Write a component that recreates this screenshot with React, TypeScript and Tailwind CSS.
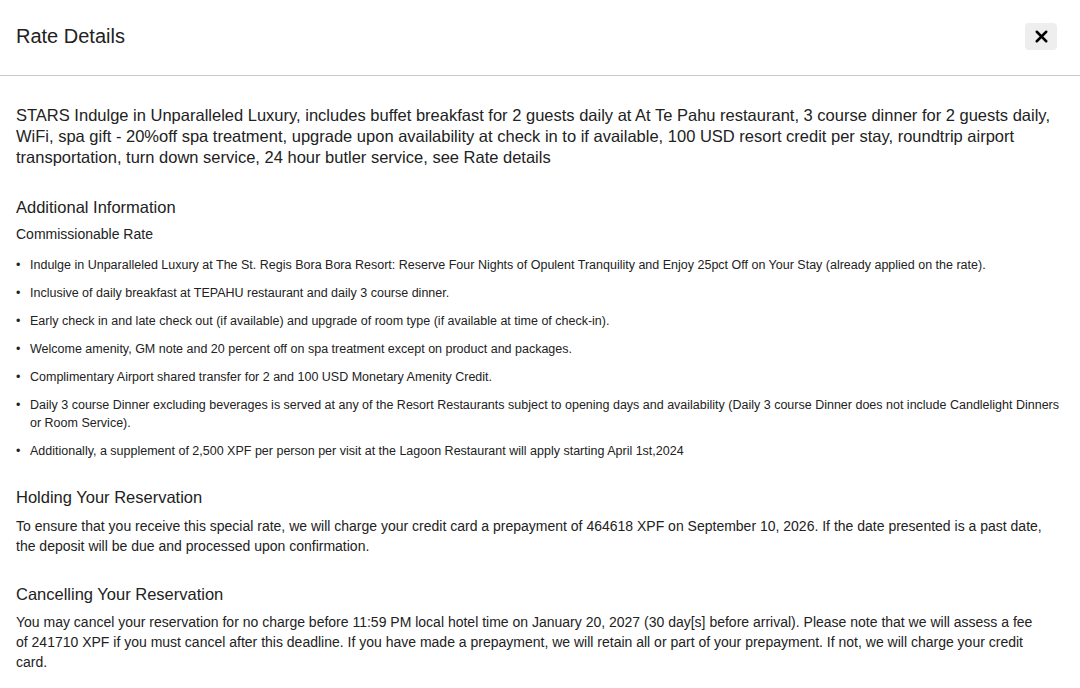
import { X } from "lucide-react";

const bullets = [
  "Indulge in Unparalleled Luxury at The St. Regis Bora Bora Resort: Reserve Four Nights of Opulent Tranquility and Enjoy 25pct Off on Your Stay (already applied on the rate).",
  "Inclusive of daily breakfast at TEPAHU restaurant and daily 3 course dinner.",
  "Early check in and late check out (if available) and upgrade of room type (if available at time of check-in).",
  "Welcome amenity, GM note and 20 percent off on spa treatment except on product and packages.",
  "Complimentary Airport shared transfer for 2 and 100 USD Monetary Amenity Credit.",
  "Daily 3 course Dinner excluding beverages is served at any of the Resort Restaurants subject to opening days and availability (Daily 3 course Dinner does not include Candlelight Dinners or Room Service).",
  "Additionally, a supplement of 2,500 XPF per person per visit at the Lagoon Restaurant will apply starting April 1st,2024",
];

export default function App() {
  return (
    <div className="h-[688px] w-full overflow-hidden bg-white text-[#222] font-['Liberation_Sans',Arial,sans-serif]">
      <header className="flex h-[76px] items-center justify-between border-b border-[#c8c8c8] pl-4 pr-[23px]">
        <h1 className="text-[20px] leading-none -mt-[4px]">Rate Details</h1>
        <button className="flex h-[27px] w-[32px] items-center justify-center rounded bg-[#eeeeee] -mt-[3px]">
          <X className="h-[19px] w-[19px] text-black" strokeWidth={3.2} />
        </button>
      </header>

      <main className="px-4 pt-[29px]">
        <p className="text-[16.5px] leading-[21px]">
          STARS Indulge in Unparalleled Luxury, includes buffet breakfast for 2 guests daily at At Te Pahu restaurant, 3 course dinner for 2 guests daily, WiFi, spa gift - 20%off spa treatment, upgrade upon availability at check in to if available, 100 USD resort credit per stay, roundtrip airport transportation, turn down service, 24 hour butler service, see Rate details
        </p>

        <h2 className="mt-[28px] text-[16.5px] leading-[22px]">Additional Information</h2>
        <p className="mt-[6px] text-[14px] leading-[20px]">Commissionable Rate</p>
        <ul className="mt-[12px]">
          {bullets.map((b) => (
            <li key={b} className="mb-[10px] flex text-[12.5px] leading-[18px]">
              <span className="w-[14px] shrink-0">•</span>
              <span>{b}</span>
            </li>
          ))}
        </ul>

        <h2 className="mt-[26px] text-[16.5px] leading-[22px]">Holding Your Reservation</h2>
        <p className="mt-[8px] text-[14px] leading-[20px]">
          To ensure that you receive this special rate, we will charge your credit card a prepayment of 464618 XPF on September 10, 2026. If the date presented is a past date, the deposit will be due and processed upon confirmation.
        </p>

        <h2 className="mt-[27px] text-[16.5px] leading-[22px]">Cancelling Your Reservation</h2>
        <p className="mt-[7px] pr-[20px] text-[14px] leading-[20px]">
          You may cancel your reservation for no charge before 11:59 PM local hotel time on January 20, 2027 (30 day[s] before arrival). Please note that we will assess a fee of 241710 XPF if you must cancel after this deadline. If you have made a prepayment, we will retain all or part of your prepayment. If not, we will charge your credit card.
        </p>
      </main>
    </div>
  );
}
